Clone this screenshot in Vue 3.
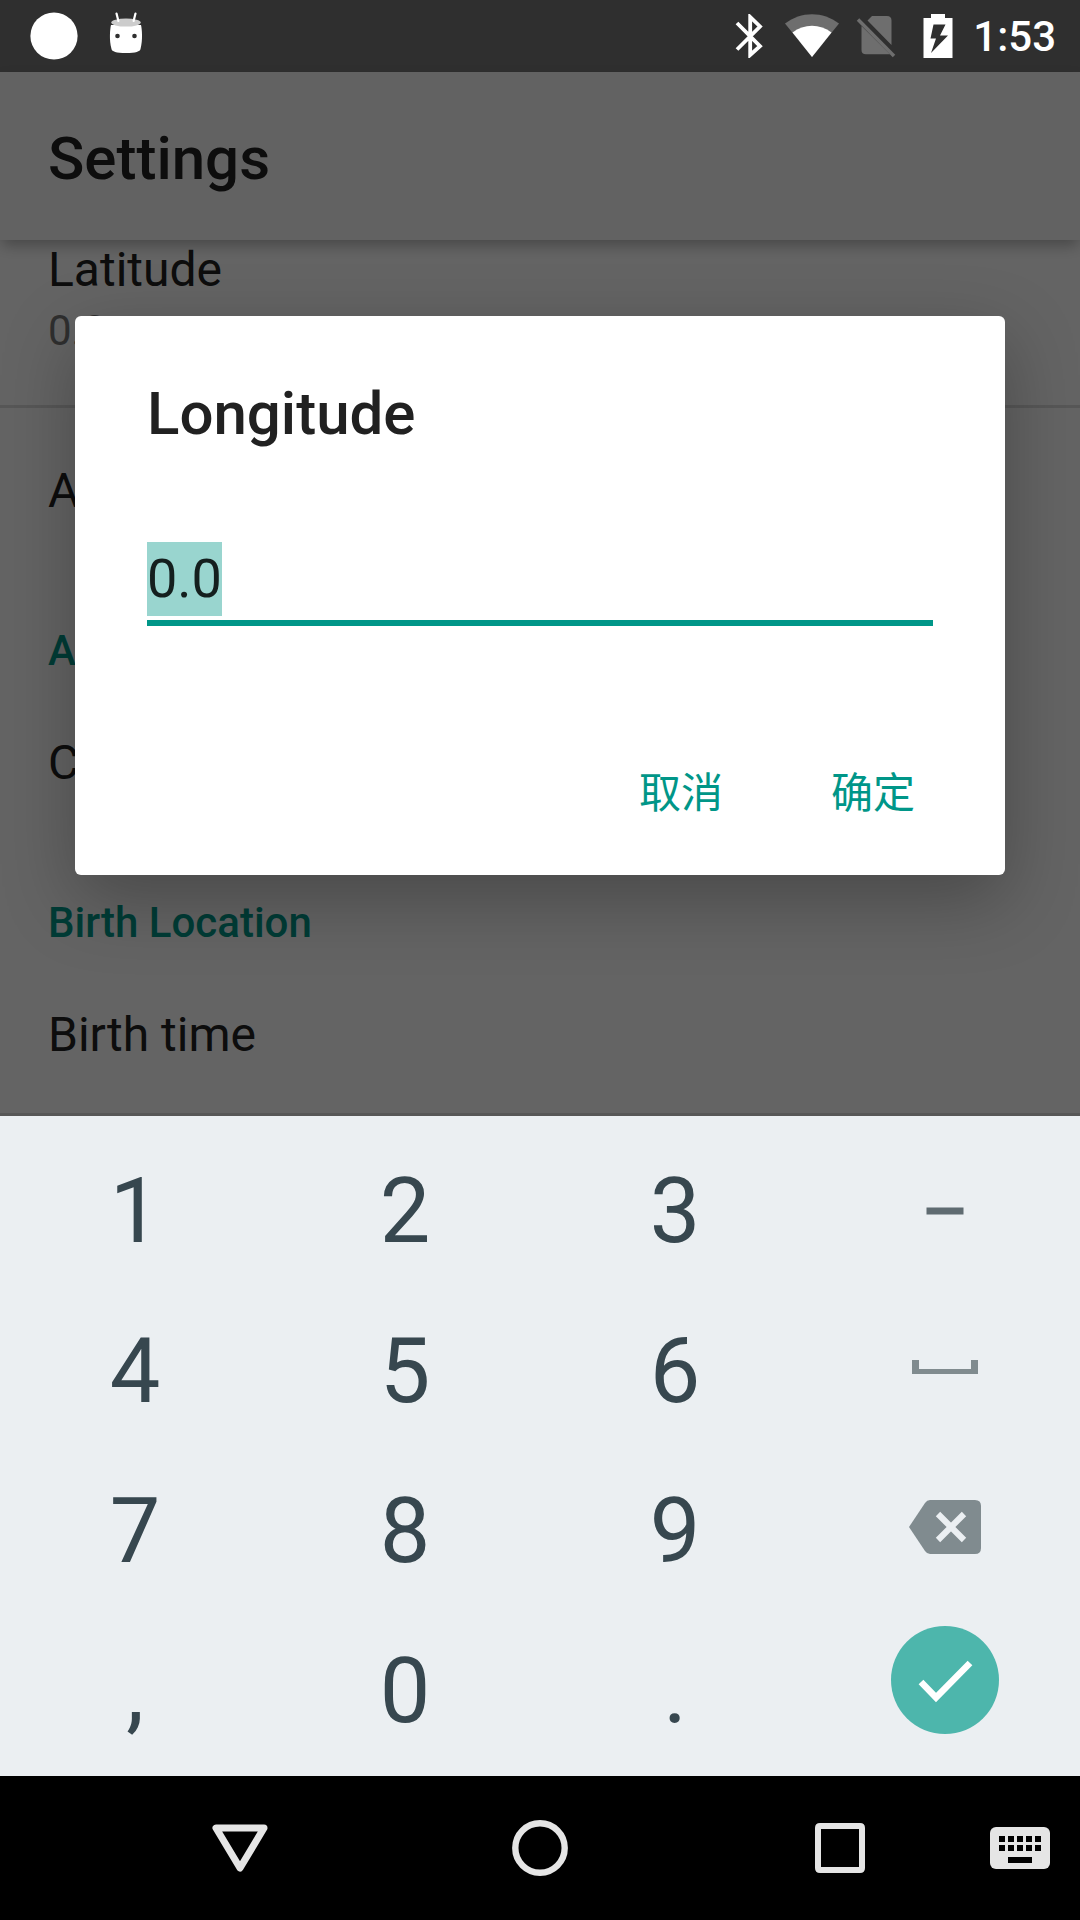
<script setup>
import { onMounted, ref } from 'vue'

const longitude = ref('0.0')
const field = ref(null)

const keys = [
  '1', '2', '3', 'dash',
  '4', '5', '6', 'space',
  '7', '8', '9', 'delete',
  ',', '0', '.', 'done'
]
const iconKeys = ['dash', 'space', 'delete', 'done']

onMounted(() => {
  field.value.focus()
  field.value.select()
})
</script>

<template>
  <div class="screen">
    <header class="status">
      <div class="status-side">
        <svg width="48" height="48" viewBox="0 0 48 48"><circle cx="24" cy="24" r="23.6" fill="#fff" /></svg>
        <svg width="36" height="48" viewBox="0 0 36 48">
          <path d="M3 13C2 17 1 28 3.500 37C4 39.500 8 41 18 41S32 39.500 32.500 37C35 28 34 17 33 13Z" fill="#fff" />
          <ellipse cx="18" cy="10.600" rx="14.800" ry="4" fill="#ccc" />
          <path d="M8.500 1.500L10.400 9M27.500 1.500L25.600 9" stroke="#fff" stroke-width="2.200" stroke-linecap="round" />
          <circle cx="9.500" cy="24" r="2.300" fill="#2f2f2f" />
          <circle cx="26.500" cy="24" r="2.300" fill="#2f2f2f" />
        </svg>
      </div>
      <div class="status-side right">
        <svg class="bluetooth" width="28" height="44" viewBox="0 0 28 44">
          <path d="M2 9L25 32.200L15.200 41V3L25 12.500L2 35.500" fill="none" stroke="#fff" stroke-width="3.800" />
        </svg>
        <svg class="wifi" width="54" height="44" viewBox="0 0 54 44">
          <path d="M0 9.500C16 -3 38 -3 54 9.500L27 43Z" fill="#6e6e6e" />
          <path d="M7.500 18.500C19 9.500 35 9.500 46.500 18.500L27 43Z" fill="#fff" />
        </svg>
        <svg class="sim" width="40" height="44" viewBox="0 0 40 44">
          <path d="M11.500 6.500L16 2H31Q35.500 2 35.500 6.500V31ZM5.500 12L34 40.300H10Q5.500 40.300 5.500 36Z" fill="#6e6e6e" />
          <path d="M2 5.500L38 42" stroke="#6e6e6e" stroke-width="3.500" />
        </svg>
        <svg class="battery" width="30" height="44" viewBox="0 0 30 44">
          <path fill="#fff" fill-rule="evenodd" d="M8 0H22V4H29.500V44H.5V4H8ZM10.500 10.500L7.500 24.500H13L8 39L25 21.500H17L22.500 10.500Z" />
        </svg>
        <time>1:53</time>
      </div>
    </header>

    <main class="app">
      <div class="bar"><h1>Settings</h1></div>
      <div class="list">
        <div class="item first">
          <div class="name">Latitude</div>
          <div class="summary">0.0</div>
        </div>
        <div class="item"><div class="name">A</div></div>
        <h2>A</h2>
        <div class="item"><div class="name">C</div></div>
        <h2>Birth Location</h2>
        <div class="item last"><div class="name">Birth time</div></div>
      </div>

      <div class="scrim">
        <form class="dialog" role="dialog" aria-labelledby="dialog-title" @submit.prevent>
          <label id="dialog-title" for="longitude">Longitude</label>
          <input id="longitude" ref="field" v-model="longitude" type="text" autocomplete="off">
          <div class="actions">
            <button type="button">取消</button>
            <button type="submit">确定</button>
          </div>
        </form>
      </div>
    </main>

    <section class="keyboard" aria-label="Keyboard">
      <button v-for="key in keys" :key="key" type="button" :class="iconKeys.includes(key) ? ['icon', key] : 'digit'" :aria-label="key">
        <svg v-if="key === 'dash'" width="38" height="8" viewBox="0 0 38 8"><path d="M.5 .5H37.500V7.500H.5Z" fill="#5f6b71" /></svg>
        <svg v-else-if="key === 'space'" width="66" height="14" viewBox="0 0 66 14"><path d="M0 0H7V9H59V0H66V14H0Z" fill="#808b8f" /></svg>
        <svg v-else-if="key === 'delete'" width="72" height="54" viewBox="0 0 72 54">
          <path d="M0 27L16 3Q18 0 21 0H66Q72 0 72 6V48Q72 54 66 54H21Q18 54 16 51Z" fill="#808b8f" />
          <path d="M29 14L55 40M55 14L29 40" stroke="#ebeff2" stroke-width="6.200" />
        </svg>
        <svg v-else-if="key === 'done'" width="108" height="108" viewBox="0 0 108 108">
          <circle cx="54" cy="54" r="54" fill="#4db6ac" />
          <path d="M30 56L45 71.500L79 37" fill="none" stroke="#fff" stroke-width="6.600" />
        </svg>
        <template v-else>{{ key }}</template>
      </button>
    </section>

    <nav class="nav">
      <button type="button" aria-label="Back">
        <svg width="56" height="56" viewBox="0 0 56 56"><path d="M4 8H52L28 48Z" fill="none" stroke="#e5e5e5" stroke-width="7" stroke-linejoin="round" /></svg>
      </button>
      <button type="button" aria-label="Home">
        <svg width="56" height="56" viewBox="0 0 56 56"><circle cx="28" cy="28" r="24.700" fill="none" stroke="#e5e5e5" stroke-width="6.400" /></svg>
      </button>
      <button type="button" aria-label="Recents">
        <svg width="56" height="56" viewBox="0 0 56 56"><path fill="#e5e5e5" fill-rule="evenodd" d="M8 3H48Q53 3 53 8V48Q53 53 48 53H8Q3 53 3 48V8Q3 3 8 3ZM9 9V47H47V9Z" /></svg>
      </button>
      <button class="ime" type="button" aria-label="Switch keyboard">
        <svg width="60" height="42" viewBox="0 0 60 42">
          <rect width="60" height="42" rx="6" fill="#e5e5e5" />
          <path fill="#000" d="M9 9h6v6h-6zM18 9h6v6h-6zM27 9h6v6h-6zM36 9h6v6h-6zM45 9h6v6h-6zM9 18h6v6h-6zM18 18h6v6h-6zM27 18h6v6h-6zM36 18h6v6h-6zM45 18h6v6h-6zM18 30h24v6h-24z" />
        </svg>
      </button>
    </nav>
  </div>
</template>

<style>
body {
  margin: 0;
}
</style>

<style scoped>
.screen {
  display: flex;
  flex-direction: column;
  min-height: 100vh;
  font-family: Roboto, "Noto Sans CJK SC", sans-serif;
  color: #212121;
}
svg {
  display: block;
  flex: none;
}
button {
  border: 0;
  margin: 0;
  padding: 0;
  background: none;
  font-family: inherit;
}
.status {
  display: flex;
  justify-content: space-between;
  height: 72px;
  padding: 0 24px 0 30px;
  background: #2f2f2f;
}
.status-side {
  display: flex;
  align-items: center;
  gap: 30px;
}
.right {
  gap: 0;
}
.bluetooth {
  margin-right: 22px;
}
.wifi {
  margin-right: 17px;
}
.sim {
  margin-right: 27px;
}
.battery {
  margin-right: 20px;
}
time {
  padding-top: 2px;
  color: #fff;
  font-size: 42px;
  font-weight: 500;
  line-height: 70px;
}
.app {
  position: relative;
  flex: 1;
  background: #fafafa;
}
.bar {
  position: relative;
  display: flex;
  align-items: center;
  height: 168px;
  padding: 0 48px;
  background: #f5f5f5;
  box-shadow: 0 7px 14px -2px rgba(0, 0, 0, 0.3);
}
h1 {
  margin: 0;
  padding-top: 6px;
  font-size: 60px;
  font-weight: 500;
  line-height: 72px;
}
.item {
  padding: 55px 48px 50px;
}
.name {
  font-size: 48px;
  line-height: 56px;
}
.first {
  padding: 2px 48px 49px;
  border-bottom: 3px solid #dadada;
}
.summary {
  margin-top: 8px;
  font-size: 42px;
  line-height: 50px;
  color: #757575;
}
.last {
  border-bottom: 3px solid #dadada;
}
h2 {
  margin: 0;
  padding: 57px 48px 4px;
  font-size: 42px;
  font-weight: 500;
  line-height: 50px;
  color: #009688;
}
.scrim {
  position: absolute;
  inset: 0;
  padding: 244px 75px 0;
  background: rgba(0, 0, 0, 0.6);
  overflow: hidden;
}
.dialog {
  display: flex;
  flex-direction: column;
  padding: 62px 0 30px;
  border-radius: 6px;
  background: #fff;
  box-shadow: 0 24px 72px rgba(0, 0, 0, 0.28);
}
.dialog label {
  padding: 0 72px;
  font-size: 60px;
  font-weight: 500;
  line-height: 72px;
}
.dialog input {
  height: 74px;
  margin: 92px 72px 0;
  padding: 0 0 4px;
  border: 0;
  border-bottom: 6px solid #009688;
  border-radius: 0;
  outline: 0;
  background: none;
  font-family: inherit;
  font-size: 54px;
  line-height: 74px;
  color: #212121;
  caret-color: transparent;
}
.dialog input::selection {
  background: #99d5cf;
  color: #141f1e;
}
.actions {
  display: flex;
  justify-content: flex-end;
  margin-top: 111px;
  padding-right: 36px;
}
.actions button {
  height: 108px;
  padding: 0 54px 4px;
  font-size: 42px;
  color: #009688;
}
.keyboard {
  display: grid;
  grid-template-columns: repeat(4, 1fr);
  grid-auto-rows: 160px;
  padding: 15px 0 5px;
  background: #ebeff2;
}
.keyboard button {
  display: flex;
  align-items: center;
  justify-content: center;
}
.digit {
  font-size: 90px;
  color: #37474f;
}
.space,
.delete {
  padding-bottom: 8px;
}
.done {
  padding-bottom: 22px;
}
.nav {
  display: grid;
  grid-template-columns: 10fr 10fr 10fr 3fr;
  height: 144px;
  padding-left: 90px;
  background: #000;
}
.nav button {
  display: flex;
  align-items: center;
  justify-content: center;
}
.nav .ime {
  justify-content: flex-end;
  padding-right: 30px;
}
</style>
